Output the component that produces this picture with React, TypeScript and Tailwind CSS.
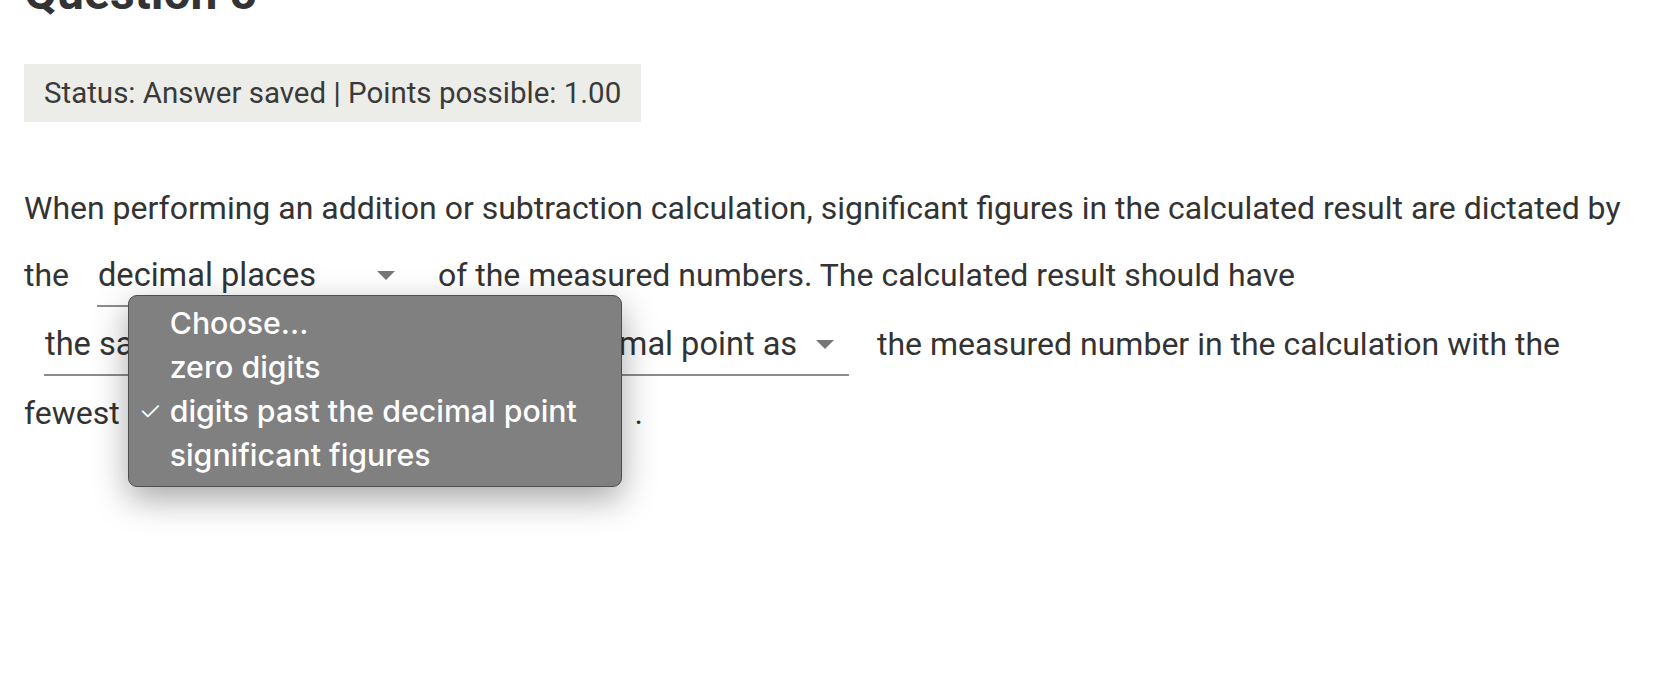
import React from "react";

const Caret = () => (
  <svg width="18" height="9" viewBox="0 0 18 9" className="shrink-0">
    <path d="M0 0 L18 0 L9 9 Z" fill="#777" />
  </svg>
);

const Select = ({
  value,
  width,
  children,
}: {
  value: string;
  width: string;
  children?: React.ReactNode;
}) => (
  <span
    className={`relative mx-[20px] mb-[4px] inline-flex items-center justify-between border-b-2 border-[#8c8c8c] pr-[15px] pb-[8px] align-baseline leading-[44px] ${width}`}
  >
    <span className="whitespace-nowrap pl-[1px] text-[32.6px]">{value}</span>
    <Caret />
    {children}
  </span>
);

const options = [
  "Choose...",
  "zero digits",
  "digits past the decimal point",
  "significant figures",
];

const Menu = () => (
  <div className="absolute left-[-20px] top-[-96px] z-10 w-[494px] rounded-[9px] border border-[#4e4e4e] bg-[#808080] pt-[5px] pb-[9px] shadow-[0_12px_34px_rgba(0,0,0,0.35)] font-['Inter',sans-serif] text-[30.3px] font-medium text-white">
    {options.map((o) => (
      <div key={o} className="flex h-[44px] items-center">
        <span className="w-[41px] pl-[10px] text-[26px] font-light">
          {o === "digits past the decimal point" ? "✓" : ""}
        </span>
        <span>{o}</span>
      </div>
    ))}
  </div>
);

export default function App() {
  return (
    <div className="min-h-screen overflow-hidden bg-white pl-[24px] font-['Roboto',sans-serif] text-[#333]">
      <h3 className="mt-[-31px] text-[48px] font-bold leading-none">Question 5</h3>

      <div className="mt-[47px] inline-block bg-[#ecede8] px-[20px] py-[11px] text-[29.5px] leading-[36px] text-[#3a3a3a]">
        Status: Answer saved | Points possible: 1.00
      </div>

      <p className="mt-[53px] w-[1607px] text-[32px] leading-[67px]">
        When performing an addition or subtraction calculation, significant
        figures in the calculated result are dictated by the{" "}
        <Select value="decimal places" width="w-[313px]" /> of the measured
        numbers. The calculated result should have{" "}
        <Select
          value="the same number of digits past the decimal point as"
          width="w-[805px]"
        />{" "}
        the measured number in the calculation with the fewest{" "}
        <Select value="digits past the decimal point" width="w-[459px]">
          <Menu />
        </Select>{" "}
        .
      </p>
    </div>
  );
}
